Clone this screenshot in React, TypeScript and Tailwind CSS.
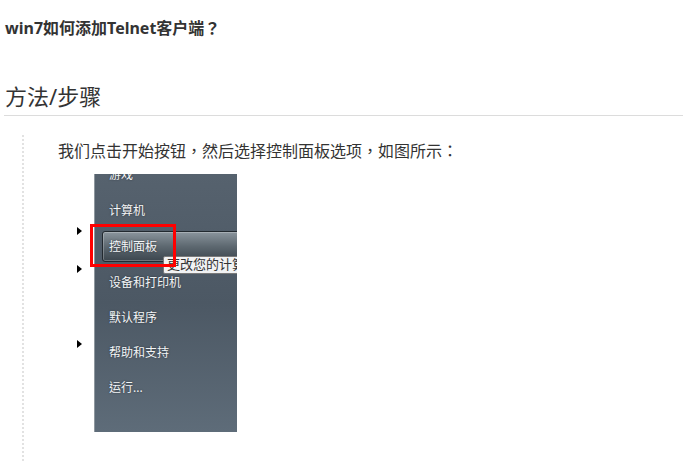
import React from 'react';

const menuItems = [
  { label: '游戏', h: 'h-[35px]' },
  { label: '计算机', h: 'h-[37px]' },
  { label: '控制面板', h: 'h-[36px]', active: true },
  { label: '设备和打印机', h: 'h-[35px]' },
  { label: '默认程序', h: 'h-[35px]' },
  { label: '帮助和支持', h: 'h-[36px]' },
  { label: '运行...', h: 'h-[34px]' },
];

const Arrow: React.FC<{ gap: string }> = ({ gap }) => (
  <span
    className={`${gap} ml-[7px] w-0 h-0 border-y-[4px] border-y-transparent border-l-[5px] border-l-black`}
  />
);

const StartMenuShot: React.FC = () => (
  <div className="relative flex w-[167px] h-[258px]">
    {/* white strip with submenu arrows */}
    <div className="flex flex-col w-[24px] h-full bg-white">
      <Arrow gap="mt-[53px]" />
      <Arrow gap="mt-[30px]" />
      <Arrow gap="mt-[67px]" />
    </div>

    {/* grey start menu panel */}
    <div className="relative flex-1 h-full overflow-hidden border-l border-l-[#8e979e] bg-gradient-to-b from-[#56626e] via-[#4c5864] to-[#5e6c79]">
      <div className="flex flex-col mt-[-17px]">
        {menuItems.map((item) => (
          <div key={item.label} className={`${item.h} relative flex items-center`}>
            {item.active && (
              <div className="absolute left-[7px] right-[-6px] top-[2px] bottom-[3px] rounded-[3px] border border-[#22292f] bg-gradient-to-b from-[#8b959d] via-[#5d6870] to-[#3c464e] shadow-[inset_0_0_0_1px_rgba(255,255,255,0.25)]" />
            )}
            <span className="relative pl-[14px] text-[12px] text-[#f4f6f8] [text-shadow:0_0_2px_rgba(0,0,0,0.5)]">
              {item.label}
            </span>
          </div>
        ))}
      </div>
      {/* tooltip */}
      <div className="absolute left-[68px] top-[82px] h-[18px] pl-[3px] pr-[10px] flex items-center bg-[#f1f2f3] border border-[#7a7a7a] rounded-[2px] text-[13px] text-[#333] whitespace-nowrap">
        更改您的计算机
      </div>
    </div>

    {/* red highlight frame */}
    <div className="absolute left-[20px] top-[50px] w-[86px] h-[43px] border-[3px] border-[#ff0000]" />
  </div>
);

const App: React.FC = () => {
  return (
    <div className="w-[683px] h-[463px] overflow-hidden bg-white font-['Noto_Sans','Noto_Sans_CJK_TC',sans-serif] text-[#333]">
      <div className="pl-[5px] pt-[17px]">
        <h1 className="text-[16px] leading-[22px] font-bold">win7如何添加Telnet客户端？</h1>
      </div>

      {/* Section heading */}
      <div className="ml-[4px] mt-[42px] pl-[1px] pb-[4px] border-b border-[#dcdcdc]">
        <h2 className="text-[22px] leading-[30px] text-[#333]">方法/步骤</h2>
      </div>

      {/* Steps */}
      <div className="ml-[22px] mt-[19px] border-l-2 border-dotted border-[#e2e2e2] pl-[34px] h-[330px]">
        <p className="pt-[6px] text-[16px] leading-[20px] text-[#333]">
          我们点击开始按钮，然后选择控制面板选项，如图所示：
        </p>
        <div className="mt-[13px] ml-[12px]">
          <StartMenuShot />
        </div>
      </div>
    </div>
  );
};

export default App;
